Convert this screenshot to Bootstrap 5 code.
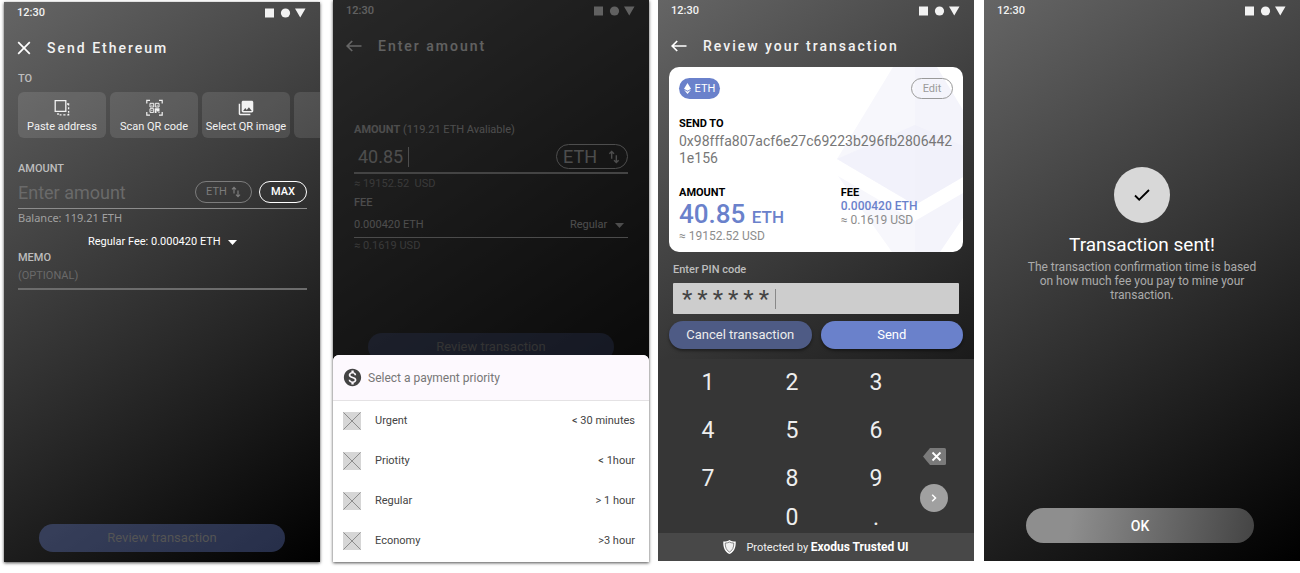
<!DOCTYPE html>
<html lang="en">
<head>
<meta charset="utf-8">
<meta name="viewport" content="width=device-width, initial-scale=1">
<title>Send Ethereum flow</title>
<link href="https://cdn.jsdelivr.net/npm/bootstrap@5.3.0/dist/css/bootstrap.min.css" rel="stylesheet">
<style>
  body { font-family: Roboto, "Liberation Sans", sans-serif; font-size: 11px; line-height: 16px; background: #fff; }
  svg { display: block; flex: none; }
  button, input, select { font: inherit; color: inherit; background: none; border: 0; padding: 0; margin: 0; }
  input:focus { outline: 0; }
  p, h1, h2 { margin: 0; }

  .flow { min-height: 100vh; padding: 0 0 12px 4px; }
  .screen { flex: 1 1 0; min-width: 0; position: relative; color: #fff; background: linear-gradient(145deg, #656565, #000); }
  .screen-send { margin: 2px 13px 0 0; }
  .screen-amount { margin-right: 9px; }
  .screen-review { margin-right: 10px; }
  .screen-send, .screen-amount { margin-bottom: -1px; box-shadow: 0 1px 3px rgba(0,0,0,.7); }

  .status { height: 22px; padding: 0 14px 0 13px; font-weight: 500; color: #f2f2f2; }
  .topbar { margin-top: 12px; height: 24px; padding: 0 13px; gap: 16px; }
  .topbar h1 { font-size: 14px; line-height: 24px; font-weight: 500; letter-spacing: 2px; color: #f2f2f2; white-space: nowrap; }
  .field-label { display: block; font-weight: 500; color: #bdbdbd; line-height: 16px; }
  .pill { flex: none; border: 1px solid currentColor; border-radius: 16px; }
  .wide-btn { height: 28px; border-radius: 14px; font-size: 13px; color: #545454; background: rgba(104,126,204,.35); }
  .picker { appearance: none; padding-right: 16px; height: 16px; line-height: 16px;
    background: url("data:image/svg+xml,%3Csvg xmlns='http://www.w3.org/2000/svg' viewBox='0 0 9 5'%3E%3Cpath fill='%23fff' d='M0 0h9L4.500 5z'/%3E%3C/svg%3E") no-repeat right center / 9px 5px; }
  .fee-row .picker { background-image: url("data:image/svg+xml,%3Csvg xmlns='http://www.w3.org/2000/svg' viewBox='0 0 9 5'%3E%3Cpath fill='%23c0c0c0' d='M0 0h9L4.500 5z'/%3E%3C/svg%3E"); }

  .send-body { padding: 11px 13px 10px 14px; }
  .send-body .wide-btn { margin: auto 22px 0 21px; }
  .tiles { margin: 5px -13px 23px 0; gap: 4px; overflow: hidden; }
  .tile { flex: none; width: 88px; height: 46px; border-radius: 6px; background: rgba(255,255,255,.11); color: #f2f2f2; white-space: nowrap; padding-bottom: 3px; }
  .amount-row { padding: 4px 0 5px; gap: 7px; border-bottom: 1px solid #8c8c8c; }
  .amount-row input { min-width: 0; font-size: 18px; height: 22px; }
  .amount-row input::placeholder, .memo::placeholder { color: #6a6a6a; opacity: 1; }
  .amount-row .pill { height: 22px; }
  .unit { width: 57px; color: #7c7c7c; }
  .max { width: 48px; font-weight: 500; }
  .balance { font-family: "Noto Sans", sans-serif; color: #a0a0a0; margin: 1px 0 8px; }
  .memo { height: 24px; padding: 2px 0 5px; border-bottom: 2px solid #6c6c6c; }

  .amount-body { padding: 64px 21px 0; color: #c0c0c0; }
  .soft { color: #909090; }
  .big-row { padding: 6px 0 3px; border-bottom: 2px solid #aaa; font-size: 18px; }
  .big-row input { width: 46px; height: 25px; }
  .big-row .pill { width: 72px; height: 25px; padding: 0 7px 0 6px; }
  .caret { width: 1px; height: 20px; background: currentColor; }
  .quote { margin: 2px 0 3px; }
  .fee-row { padding: 6px 0 4px; border-bottom: 1px solid #bbb; }
  .under { margin: 79px 14px -7px; color: #808080; }
  .scrim { position: absolute; inset: 0; background: rgba(0,0,0,.6); }
  .sheet { position: relative; border-radius: 6px 6px 0 0; background: #fff; color: #444; }
  .sheet-head { height: 46px; padding: 0 10px; gap: 6px; border-bottom: 1px solid #e4e2e4; background: #fdf9fe; border-radius: 6px 6px 0 0; color: #777; }
  .sheet-head h2 { font-size: 12px; line-height: 16px; font-weight: 400; }
  .option { height: 40px; width: 100%; padding: 0 14px 0 10px; gap: 14px; }
  .options { padding-bottom: 1px; }

  .receipt { margin: 9px 11px 0; height: 185px; border-radius: 10px; background: #fff; padding: 11px 10px; color: #777; overflow: hidden; position: relative; }
  .watermark { position: absolute; right: 0; top: 0; }
  .receipt > div, .receipt > p { position: relative; }
  .coin { height: 21px; border-radius: 11px; width: 41px; background: #6a81cb; color: #fff; gap: 4px; }
  .edit { width: 42px; height: 21px; color: #9a9a9a; }
  .ink { color: #000; font-weight: 700; line-height: 12px; }
  .send-to { margin-top: 19px; }
  .address { font-size: 14px; line-height: 17px; word-break: break-all; margin: 3px 0 20px; }
  .usd { font-size: 12px; line-height: 14px; color: #8c8c8c; }
  .blue { color: #6a81cb; font-weight: 500; }
  .sum { font-size: 26px; line-height: 30px; }
  .sum small { font-size: 17px; line-height: 17px; }
  .sum-col { width: 59%; }
  .pin-area { margin: 10px 15px 0; }
  .pin { margin-top: 5px; height: 31px; background: #cdcdcd; border-radius: 1px; padding: 0 9px; color: #888; }
  .pin input { width: 93px; height: 31px; font-size: 24px; letter-spacing: 5px; color: #444; }
  .actions { margin: 7px 11px 10px; gap: 9px; }
  .actions button { flex: 1 1 0; height: 28px; border-radius: 14px; font-size: 13px; background: #6a81cb; box-shadow: 0 2px 3px rgba(0,0,0,.4); }
  .actions .cancel { background: #4e5b85; color: #ececec; }
  .keypad { display: grid; grid-template-columns: 84fr 84fr 84fr 32fr; grid-template-rows: 48px 48px 48px 30px; padding: 0 24px 0 8px; background: #363636; color: #eee; font-size: 23px; }
  .keypad-side { grid-column: 4; grid-row: 1 / 5; padding-bottom: 21px; gap: 19px; }
  .go { width: 28px; height: 28px; border-radius: 50%; background: #a0a0a0; }
  .trust { height: 28px; background: #484848; gap: 10px; color: #f0f0f0; }
  .trust b { font-size: 12px; font-weight: 700; color: #fff; }

  .done-body { padding: 145px 42px 18px; }
  .tick { width: 56px; height: 56px; border-radius: 50%; background: #d8d8d8; }
  .done-body h1 { font-size: 19px; line-height: 24px; font-weight: 400; margin-top: 10px; }
  .done-body p { font-size: 12px; line-height: 14px; color: #ababab; margin: 3px -3px 0; max-width: 240px; }
  .ok { height: 35px; border-radius: 18px; font-size: 14px; font-weight: 500; background: linear-gradient(100deg, #8e8e8e 20%, #444); }
</style>
</head>
<body>
<svg width="0" height="0" class="position-absolute" aria-hidden="true">
  <symbol id="status-icons" viewBox="0 0 41 10"><path fill="currentColor" d="M0 .5h9v9H0zM30 .5h10.500L35.250 9.500z"/><circle cx="20.500" cy="5" r="4.600" fill="currentColor"/></symbol>
  <symbol id="back" viewBox="0 0 16 12"><path d="M15.500 6H1.500M6.200 1L1.200 6l5 5" fill="none" stroke="currentColor" stroke-width="1.700"/></symbol>
  <symbol id="swap" viewBox="0 0 10 12"><path d="M3 7.500V1.500M1 3.300l2-2 2 2M7 4.500v6M5 8.700l2 2 2-2" fill="none" stroke="currentColor" stroke-width="1.200"/></symbol>
  <symbol id="thumb" viewBox="0 0 18 18"><path fill="#d6d6d6" d="M0 0h18v18H0z"/><path d="M.5.5l17 17M17.500.5l-17 17" stroke="#8c8c8c" stroke-width="1"/></symbol>
</svg>

<main class="flow d-flex">

  <section class="screen screen-send d-flex flex-column">
    <div class="status d-flex align-items-center justify-content-between"><span>12:30</span><svg width="41" height="10"><use href="#status-icons"/></svg></div>
    <header class="topbar d-flex align-items-center">
      <button type="button" aria-label="Close"><svg width="14" height="14" viewBox="0 0 14 14"><path d="M1.200 1.200l11.600 11.600M12.800 1.200L1.200 12.800" stroke="#fff" stroke-width="1.700"/></svg></button>
      <h1>Send Ethereum</h1>
    </header>
    <div class="send-body d-flex flex-column flex-fill">
      <span class="field-label">TO</span>
      <div class="tiles d-flex">
        <button type="button" class="tile d-flex flex-column align-items-center justify-content-end">
          <svg width="16" height="20" viewBox="0 0 16 20" fill="none" stroke="currentColor" stroke-width="1.300"><path d="M1.200 1.700h10.600v10.600H1.200z"/><path d="M13 5h1.600v1.500M14.600 8.300v2M14.600 12v1.800M14.600 14.800v1.100h-1.300M11.500 15.900H9.300M7.500 15.900H5.600M4 14v1.900"/></svg>
          Paste address</button>
        <button type="button" class="tile d-flex flex-column align-items-center justify-content-end">
          <svg width="17" height="20" viewBox="0 0 17 20" fill="none" stroke="currentColor"><path d="M.8 4.500V1.300H4M13 1.300h3.200v3.200M.8 13v3.200H4M16.200 13v3.200H13" stroke-width="1.200"/><path d="M4 4.300h3.700v3.700H4zM9.300 4.300H13v3.700H9.300zM4 9.700h3.700v3.700H4z"/><path fill="currentColor" stroke="none" d="M5.400 5.700h1v1h-1zM10.700 5.700h1v1h-1zM5.400 11h1v1h-1zM8.800 9.200H13.500v3.300H11v-1H10.500v2.400H8.800zM12.500 12.900h1v1h-1z"/></svg>
          Scan QR code</button>
        <button type="button" class="tile d-flex flex-column align-items-center justify-content-end">
          <svg width="16" height="19" viewBox="1 1 22 26" fill="currentColor"><path d="M22 16V4c0-1.100-.9-2-2-2H8c-1.100 0-2 .9-2 2v12c0 1.100.9 2 2 2h12c1.100 0 2-.9 2-2zm-11-4l2.030 2.710L16 11l4 5H8l3-4zM2 6v14c0 1.100.9 2 2 2h14v-2H4V6H2z"/></svg>
          Select QR image</button>
        <button type="button" class="tile" aria-label="More"></button>
      </div>
      <label class="field-label" for="amount">AMOUNT</label>
      <div class="amount-row d-flex align-items-center">
        <input id="amount" class="flex-fill" type="text" placeholder="Enter amount">
        <button type="button" class="pill unit d-flex align-items-center justify-content-center gap-1">ETH <svg width="10" height="12"><use href="#swap"/></svg></button>
        <button type="button" class="pill max">MAX</button>
      </div>
      <p class="balance">Balance: 119.21 ETH</p>
      <select class="picker align-self-center" aria-label="Fee"><option>Regular Fee: 0.000420 ETH</option></select>
      <label class="field-label" for="memo">MEMO</label>
      <input id="memo" class="memo w-100" type="text" placeholder="(OPTIONAL)">
      <button type="button" class="wide-btn">Review transaction</button>
    </div>
  </section>

  <section class="screen screen-amount d-flex flex-column">
    <div class="status d-flex align-items-center justify-content-between"><span>12:30</span><svg width="41" height="10"><use href="#status-icons"/></svg></div>
    <header class="topbar d-flex align-items-center">
      <button type="button" aria-label="Back"><svg width="16" height="12"><use href="#back"/></svg></button>
      <h1>Enter amount</h1>
    </header>
    <div class="amount-body d-flex flex-column flex-fill">
      <label for="amount2"><b class="fw-bold">AMOUNT</b> (119.21 ETH Avaliable)</label>
      <div class="big-row d-flex align-items-center">
        <input id="amount2" class="ms-1" type="text" value="40.85">
        <span class="caret ms-1"></span>
        <button type="button" class="pill ms-auto d-flex align-items-center justify-content-between">ETH <svg width="12" height="14"><use href="#swap"/></svg></button>
      </div>
      <p class="soft quote">≈ 19152.52&nbsp; USD</p>
      <span class="field-label">FEE</span>
      <div class="fee-row d-flex justify-content-between">
        <span>0.000420 ETH</span>
        <select class="picker me-1" aria-label="Priority"><option>Regular</option></select>
      </div>
      <p class="soft">≈ 0.1619 USD</p>
      <button type="button" class="wide-btn under">Review transaction</button>
    </div>
    <div class="scrim"></div>
    <div class="sheet">
      <div class="sheet-head d-flex align-items-center">
        <svg width="19" height="19" viewBox="1 1 22 22"><path fill="#444" d="M12 2C6.480 2 2 6.480 2 12s4.480 10 10 10 10-4.480 10-10S17.520 2 12 2zm1.410 16.090V20h-2.670v-1.930c-1.710-.36-3.160-1.460-3.270-3.400h1.960c.1 1.050.82 1.870 2.650 1.870 1.960 0 2.400-.98 2.400-1.590 0-.83-.44-1.610-2.670-2.140-2.480-.6-4.180-1.620-4.180-3.670 0-1.720 1.390-2.840 3.110-3.210V4h2.670v1.950c1.860.45 2.790 1.860 2.850 3.390H14.300c-.05-1.110-.64-1.870-2.220-1.870-1.500 0-2.400.68-2.400 1.640 0 .84.65 1.390 2.670 1.910s4.180 1.390 4.180 3.910c-.01 1.830-1.380 2.830-3.120 3.160z"/></svg>
        <h2>Select a payment priority</h2>
      </div>
      <div class="options">
        <button type="button" class="option d-flex align-items-center"><svg width="18" height="18"><use href="#thumb"/></svg><span>Urgent</span><span class="ms-auto">&lt; 30 minutes</span></button>
        <button type="button" class="option d-flex align-items-center"><svg width="18" height="18"><use href="#thumb"/></svg><span>Priotity</span><span class="ms-auto">&lt; 1hour</span></button>
        <button type="button" class="option d-flex align-items-center"><svg width="18" height="18"><use href="#thumb"/></svg><span>Regular</span><span class="ms-auto">&gt; 1 hour</span></button>
        <button type="button" class="option d-flex align-items-center"><svg width="18" height="18"><use href="#thumb"/></svg><span>Economy</span><span class="ms-auto">&gt;3 hour</span></button>
      </div>
    </div>
  </section>

  <section class="screen screen-review d-flex flex-column">
    <div class="status d-flex align-items-center justify-content-between"><span>12:30</span><svg width="41" height="10"><use href="#status-icons"/></svg></div>
    <header class="topbar d-flex align-items-center">
      <button type="button" aria-label="Back"><svg width="16" height="12"><use href="#back"/></svg></button>
      <h1>Review your transaction</h1>
    </header>
    <div class="receipt">
      <svg class="watermark" width="126" height="185" viewBox="0 0 126 185"><path fill="#f7f7fc" d="M56 0H78V138L0 92zM1 109L78 154V185H55z"/><path fill="#f4f4fb" d="M78 0h22l26 43v67l-48 28zM78 154l48-28v25l-23 34H78z"/><path fill="#eeeefa" fill-opacity=".6" d="M0 92L78 58l48 21v31l-48 28z"/></svg>
      <div class="d-flex justify-content-between">
        <span class="coin d-flex align-items-center justify-content-center"><svg width="7" height="11" viewBox="0 0 7 11"><path fill="#fff" d="M3.500 0L7 5.700 3.500 7.700 0 5.700zM0 6.700l3.500 2 3.500-2L3.500 11z"/></svg>ETH</span>
        <button type="button" class="pill edit">Edit</button>
      </div>
      <p class="ink send-to">SEND TO</p>
      <p class="address">0x98fffa807acf6e27c69223b296fb28064421e156</p>
      <div class="d-flex">
        <div class="sum-col">
          <p class="ink">AMOUNT</p>
          <p class="blue sum">40.85 <small>ETH</small></p>
          <p class="usd">≈ 19152.52 USD</p>
        </div>
        <div class="text-nowrap">
          <p class="ink">FEE</p>
          <p class="usd blue">0.000420 ETH</p>
          <p class="usd">≈ 0.1619 USD</p>
        </div>
      </div>
    </div>
    <div class="pin-area">
      <label class="field-label" for="pin">Enter PIN code</label>
      <div class="pin d-flex align-items-center">
        <input id="pin" type="text" value="******"><span class="caret"></span>
      </div>
    </div>
    <div class="actions d-flex">
      <button type="button" class="cancel">Cancel transaction</button>
      <button type="button">Send</button>
    </div>
    <div class="keypad mt-auto">
      <button type="button">1</button><button type="button">2</button><button type="button">3</button>
      <button type="button">4</button><button type="button">5</button><button type="button">6</button>
      <button type="button">7</button><button type="button">8</button><button type="button">9</button>
      <span></span><button type="button">0</button><button type="button">.</button>
      <div class="keypad-side d-flex flex-column align-items-center justify-content-end">
        <button type="button" aria-label="Delete"><svg width="23" height="17" viewBox="0 0 23 17"><path fill="#7a7a7a" d="M7 0h14.500A1.500 1.500 0 0 1 23 1.500v14a1.500 1.500 0 0 1-1.500 1.500H7L0 8.500z"/><path d="M9.500 4.500l8 8M17.500 4.500l-8 8" stroke="#fff" stroke-width="1.800"/></svg></button>
        <button type="button" class="go d-flex align-items-center justify-content-center" aria-label="Next"><svg width="6" height="8" viewBox="0 0 6 8"><path d="M1.200.8L4.500 4 1.200 7.200" fill="none" stroke="#fff" stroke-width="1.500"/></svg></button>
      </div>
    </div>
    <div class="trust d-flex align-items-center justify-content-center">
      <svg width="13" height="14" viewBox="0 0 13 14"><path fill="#fff" d="M6.500 0C8 1 10 1.500 12.700 1.500c.3 6-1.500 10.500-6.200 12.500C1.800 12 0 7.500.3 1.500 3 1.500 5 1 6.500 0z"/><path fill="#f0f0f0" stroke="#555" stroke-width=".7" d="M6.500 2c1.200.7 2.600 1 4.300 1.100 0 4.200-1.200 7.300-4.300 8.900-3.100-1.600-4.300-4.700-4.300-8.900C3.900 3 5.300 2.700 6.500 2z"/></svg>
      <span>Protected by <b>Exodus Trusted UI</b></span>
    </div>
  </section>

  <section class="screen d-flex flex-column">
    <div class="status d-flex align-items-center justify-content-between"><span>12:30</span><svg width="41" height="10"><use href="#status-icons"/></svg></div>
    <div class="done-body d-flex flex-column align-items-center text-center flex-fill">
      <div class="tick d-flex align-items-center justify-content-center"><svg width="16" height="12" viewBox="0 0 16 12"><path d="M1 6.500l4.200 4.200L15 1" fill="none" stroke="#000" stroke-width="1.800"/></svg></div>
      <h1>Transaction sent!</h1>
      <p>The transaction confirmation time is based on how much fee you pay to mine your transaction.</p>
      <button type="button" class="ok align-self-stretch mt-auto me-1">OK</button>
    </div>
  </section>

</main>
<script src="https://cdn.jsdelivr.net/npm/bootstrap@5.3.0/dist/js/bootstrap.bundle.min.js"></script>
</body>
</html>
